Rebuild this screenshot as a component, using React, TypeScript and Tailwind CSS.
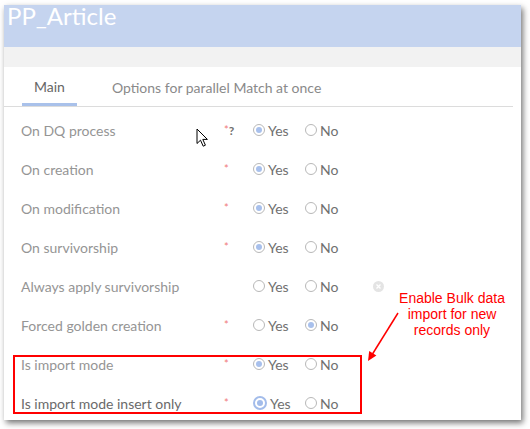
import React from "react";

type Row = {
  label: string;
  required?: boolean;
  help?: boolean;
  value?: "yes" | "no";
  focused?: boolean;
  clearable?: boolean;
};

const rows: Row[] = [
  { label: "On DQ process", required: true, help: true, value: "yes" },
  { label: "On creation", required: true, value: "yes" },
  { label: "On modification", required: true, value: "yes" },
  { label: "On survivorship", required: true, value: "yes" },
  { label: "Always apply survivorship", clearable: true },
  { label: "Forced golden creation", required: true, value: "no" },
  { label: "Is import mode", required: true, value: "yes" },
  { label: "Is import mode insert only", required: true, value: "yes", focused: true },
];

function Radio({ checked, focused }: { checked?: boolean; focused?: boolean }) {
  if (focused) {
    return (
      <span className="grid h-[14px] w-[14px] shrink-0 place-items-center rounded-full border-2 border-[#a3bcea] bg-white">
        <span className="h-[6px] w-[6px] rounded-full bg-[#a3bcea]" />
      </span>
    );
  }
  return (
    <span className="grid h-[12px] w-[12px] shrink-0 place-items-center rounded-full border border-[#b8b8b8] bg-white">
      {checked && <span className="h-[6px] w-[6px] rounded-full bg-[#a8c0ec]" />}
    </span>
  );
}

function FieldRow({ row }: { row: Row }) {
  return (
    <div className="flex h-[39px] items-center">
      <div
        className={`w-[203px] shrink-0 text-[14px] ${
          row.focused ? "text-[#6a6a6a]" : "text-[#959595]"
        }`}
      >
        {row.label}
      </div>
      <div className="flex w-[29px] shrink-0 items-center">
        {row.required && (
          <span className="-mt-[1px] text-[11px] leading-none text-[#f07878]">*</span>
        )}
        {row.help && (
          <span className="mt-[1px] text-[12px] font-bold leading-none text-[#707070]">?</span>
        )}
      </div>
      <label className="flex w-[52px] shrink-0 items-center gap-[3px] text-[14px] text-[#707070]">
        <Radio checked={row.value === "yes"} focused={row.focused} />
        <span>Yes</span>
      </label>
      <label className="flex w-[68px] shrink-0 items-center gap-[3px] text-[14px] text-[#707070]">
        <Radio checked={row.value === "no"} />
        <span>No</span>
      </label>
      {row.clearable && (
        <span className="grid h-[11px] w-[11px] place-items-center rounded-full bg-[#e4e4e4]">
          <svg width="5" height="5" viewBox="0 0 5 5">
            <path d="M0.5 0.5 L4.5 4.5 M4.5 0.5 L0.5 4.5" stroke="white" strokeWidth="1.3" />
          </svg>
        </span>
      )}
    </div>
  );
}

export default function App() {
  return (
    <div
      className="relative h-[429px] w-[530px] overflow-hidden bg-white pl-[4px] pt-[5px]"
      style={{ fontFamily: "Lato, 'Open Sans', sans-serif" }}
    >
      <div className="h-[415px] w-[517px] overflow-hidden bg-white shadow-[2px_3px_6px_rgba(0,0,0,0.55)]">
        <div className="h-[42px] bg-[#c5d4ef] pl-[3px] text-[24px] leading-[22px] text-white">
          PP_Article
        </div>
        <div className="h-[20px] bg-[#f2f2f2]" />
        <div className="mr-[8px] flex h-[40px] items-stretch border-b border-[#dcdcdc]">
          <div className="ml-[18px] flex items-center border-b-[3px] border-[#a9c1ea] px-[12px] pt-[3px] text-[14px] text-[#666]">
            Main
          </div>
          <div className="ml-[23px] flex items-center px-[12px] pt-[1px] text-[14px] text-[#8a8a8a]">
            Options for parallel Match at once
          </div>
        </div>
        <div className="pl-[17px] pt-[3.5px]">
          {rows.map((r) => (
            <FieldRow key={r.label} row={r} />
          ))}
        </div>
      </div>

      {/* mouse cursor */}
      <svg className="absolute left-[196px] top-[128px]" width="13" height="20" viewBox="0 0 13 20">
        <path
          d="M1 1 L1 15.5 L4.5 12.2 L7.2 18.2 L9.4 17.2 L6.8 11.4 L11.4 11.4 Z"
          fill="white"
          stroke="black"
          strokeWidth="1"
          strokeLinejoin="round"
        />
      </svg>

      {/* annotation */}
      <div className="absolute left-[13px] top-[355px] h-[59px] w-[349px] border-2 border-[#ff0000]" />
      <div
        className="absolute left-[392px] top-[290px] w-[120px] text-center text-[14px] leading-[16px] text-[#ff0000]"
        style={{ fontFamily: "'Liberation Sans', Arial, sans-serif" }}
      >
        Enable Bulk data
        <br />
        import for new
        <br />
        records only
      </div>
      <svg className="pointer-events-none absolute left-0 top-0" width="530" height="429">
        <line x1="398" y1="313" x2="372.5" y2="354" stroke="#ff0000" strokeWidth="1.5" />
        <polygon points="368,361 376.4,355.6 369.2,351.1" fill="#ff0000" />
      </svg>
    </div>
  );
}
